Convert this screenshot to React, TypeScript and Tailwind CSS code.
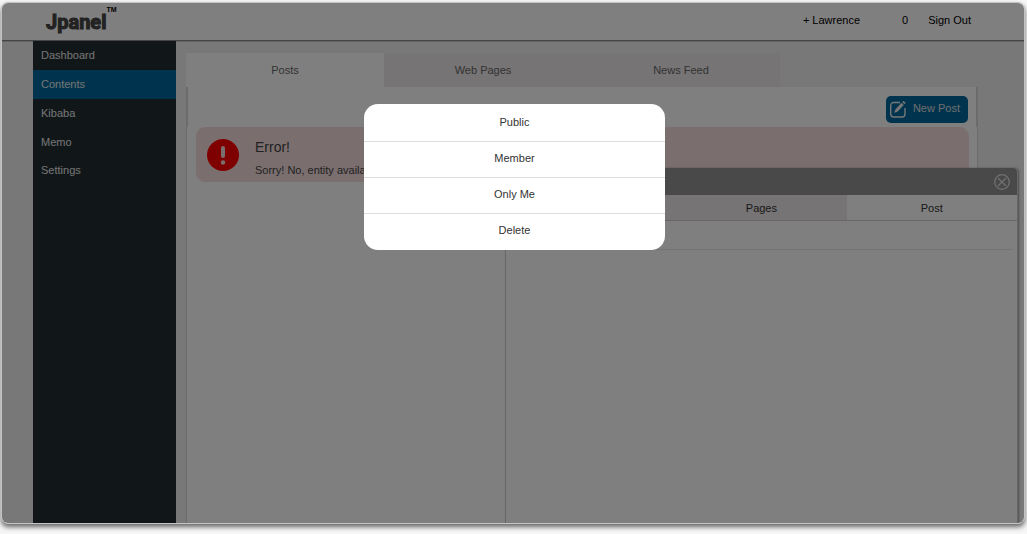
import { useState } from "react";

const menuItems = ["Dashboard", "Contents", "Kibaba", "Memo", "Settings"];
const contentTabs = ["Posts", "Web Pages", "News Feed"];
const editorTabs = ["Media", "Pages", "Post"];
const postActions = ["Public", "Member", "Only Me", "Delete"];

function Header() {
  return (
    <header className="flex h-[38px] shrink-0 items-center justify-between border-b border-[#8a8a8a] bg-white pr-[53px] pl-11 shadow-[0_1px_0_#c8c8c8]">
      <a href="#" className="flex items-start text-[#444]">
        <span className="font-[Roboto] text-[20px] leading-9 font-bold [-webkit-text-stroke:1px_#444]">
          Jpanel
        </span>
        <span className="text-[7px] leading-3 font-bold text-black">TM</span>
      </a>
      <nav className="flex items-center pb-[3px] text-black">
        <a href="#">+ Lawrence</a>
        <a href="#" className="ml-[42px]">
          0
        </a>
        <a href="#" className="ml-5">
          Sign Out
        </a>
      </nav>
    </header>
  );
}

function Sidebar() {
  const [active, setActive] = useState("Contents");
  return (
    <aside className="w-[143px] shrink-0 bg-[#232e33]">
      <nav className="grid h-36 grid-rows-5">
        {menuItems.map((item) => (
          <a
            key={item}
            href="#"
            onClick={() => setActive(item)}
            className={`flex items-center pl-2 text-[#e8e8e8] ${active === item ? "bg-[#00689c]" : ""}`}
          >
            {item}
          </a>
        ))}
      </nav>
    </aside>
  );
}

function ErrorAlert() {
  return (
    <div
      role="alert"
      className="mr-2 ml-[9px] flex h-[55px] items-center rounded-[9px] bg-[#f5dddd] pl-[11px]"
    >
      <svg viewBox="0 0 32 32" className="size-8 shrink-0">
        <circle cx="16" cy="16" r="16" fill="#ff0000" />
        <rect x="14" y="7" width="4" height="12" rx="2" fill="#f5dddd" />
        <circle cx="16" cy="23.5" r="2.2" fill="#f5dddd" />
      </svg>
      <div className="ml-4 pt-1.5 text-[#444]">
        <h2 className="text-sm leading-6">Error!</h2>
        <p className="leading-[22px]">Sorry! No, entity available</p>
      </div>
    </div>
  );
}

function Contents() {
  const [tab, setTab] = useState("Posts");
  return (
    <main className="flex grow flex-col pt-3 pr-[46px] pl-[10px]">
      <div className="grid h-[34px] w-3/4 shrink-0 grid-cols-3">
        {contentTabs.map((name) => (
          <button
            key={name}
            onClick={() => setTab(name)}
            className={`text-[#666] ${tab === name ? "bg-white" : "bg-[#ede8e9]"}`}
          >
            {name}
          </button>
        ))}
      </div>
      <section className="grow border-x border-[#d8d8d8] bg-white">
        <div className="flex h-10 items-center justify-end border-x border-[#d8d8d8] px-2 pt-1">
          <button className="flex h-[27px] items-center rounded-[5px] bg-[#00689c] pr-2 pl-1 text-[#ddd]">
            <svg
              viewBox="0 0 16 18"
              className="h-[18px] w-4"
              fill="none"
              stroke="#eeeeee"
              strokeWidth="1.4"
            >
              <path d="M10 2.5H3.7a3 3 0 0 0-3 3V14a3 3 0 0 0 3 3H12a3 3 0 0 0 3-3V8" />
              <path
                d="M4.5 12.5l1-3 6-6.5 2 2-6 6.5zM12.5 2l1-1 2 2-1 1z"
                fill="#eeeeee"
                strokeWidth="0.4"
              />
            </svg>
            <span className="ml-[7px] pb-[2px]">New Post</span>
          </button>
        </div>
        <ErrorAlert />
      </section>
    </main>
  );
}

function EditorWindow() {
  const [tab, setTab] = useState("Post");
  return (
    <section className="absolute top-[165px] right-[6px] bottom-0 left-[49.2%] rounded-t-[4px] border-x border-[#cfcfcf] bg-white shadow-[1px_0_2px_#999]">
      <div className="flex h-[27px] items-center justify-end rounded-t-[4px] bg-[#929292] pr-[7px]">
        <button aria-label="Close">
          <svg
            viewBox="0 0 16 16"
            className="size-4"
            fill="none"
            stroke="#e2e2e2"
            strokeWidth="1.3"
          >
            <circle cx="8" cy="8" r="7.3" />
            <path d="M4 4l8 8M12 4l-8 8" />
          </svg>
        </button>
      </div>
      <div className="grid h-[26px] grid-cols-3 border-b border-[#cfcfcf]">
        {editorTabs.map((name) => (
          <button
            key={name}
            onClick={() => setTab(name)}
            className={`pt-[2px] text-[#333] ${tab === name ? "bg-white" : "bg-[#ede8e9]"}`}
          >
            {name}
          </button>
        ))}
      </div>
      <div className="mr-1 h-[29px] border-b border-[#e8e8e8]" />
    </section>
  );
}

function ActionMenu() {
  return (
    <div className="absolute inset-0 flex items-start justify-center bg-black/50 pt-[101px] pl-[3px]">
      <ul className="w-[301px] divide-y divide-[#ddd] overflow-hidden rounded-[14px] bg-white pt-[2px] pb-px">
        {postActions.map((action) => (
          <li key={action}>
            <button className="block h-[35px] w-full pb-[2px] text-[#333]">
              {action}
            </button>
          </li>
        ))}
      </ul>
    </div>
  );
}

export default function App() {
  return (
    <div className="flex h-screen bg-[#f6f6f6] pt-[2px] pr-[2px] pb-[10px] pl-px font-['Liberation_Sans',Arial,sans-serif] text-[11px]">
      <div className="relative flex grow flex-col overflow-hidden rounded-[7px] border border-[#c4c4c4] bg-[#f1f1f1] shadow-[0_3px_5px_#666]">
        <Header />
        <div className="flex grow pl-[31px]">
          <Sidebar />
          <Contents />
        </div>
        <EditorWindow />
        <ActionMenu />
      </div>
    </div>
  );
}
